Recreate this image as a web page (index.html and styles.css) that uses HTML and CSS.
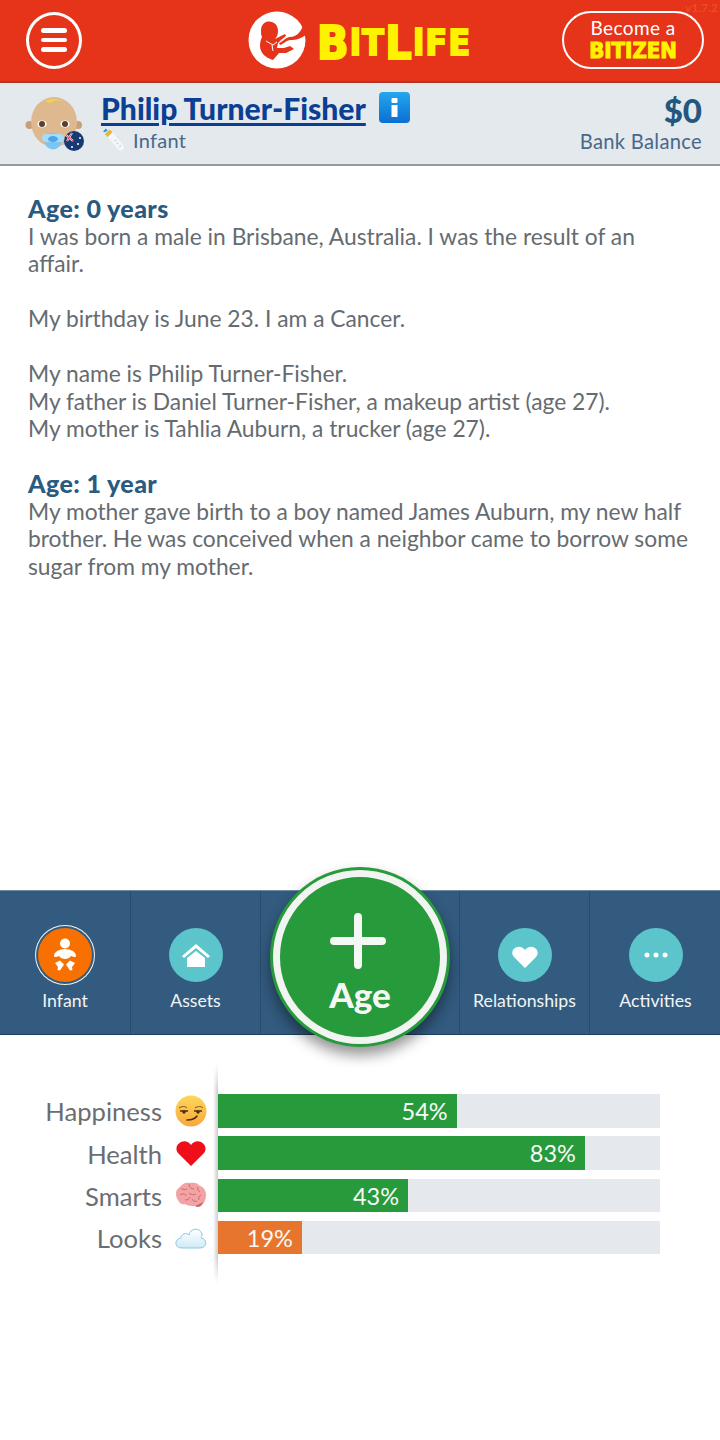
FILE: index.html
```html
<!DOCTYPE html>
<html lang="en">
<head>
<meta charset="utf-8">
<title>BitLife</title>
<link rel="stylesheet" href="styles.css">
</head>
<body>
<div class="app">
  <header class="topbar">
    <span class="version">v1.7.2</span>
    <button class="menu-btn" aria-label="Menu"><span></span><span></span><span></span></button>
    <div class="logo">
      <svg class="logo-mark" viewBox="0 0 58 58" aria-hidden="true">
        <circle cx="29" cy="29" r="28.5" fill="#fff"/>
        <path d="M13 20C13 13 17 10.500 21 10.500C26 10.500 30 14 30 20C30 23 29 26 27 28L33 25L37 23L38 25L33 29L30 32L29 37L36 37L42 35L46 38L38 42L31 42L25 49C18 47 12 42 12 35C12 31 13 28 14 26C13 24 13 22 13 20Z" fill="#e5341a"/>
        <path d="M31 32C36 30 38 26 42 26C48 26 52 22 55 15L58 24C52 28 48 29 43 29C38 29 36 33 32 34Z" fill="#e5341a"/>
        <path d="M18 30l7 4 4-3M24 34l1 6" stroke="#fff" stroke-width="1" fill="none"/>
      </svg>
      <div class="wordmark"><span class="big">B</span><span>i</span><span>T</span><span class="big">L</span><span>i</span><span>F</span><span>E</span></div>
    </div>
    <a class="bitizen"><span class="bitizen-top">Become a</span><span class="bitizen-bottom">BITIZEN</span></a>
  </header>

  <section class="profile">
    <svg class="avatar" viewBox="0 0 60 60" aria-hidden="true">
      <circle cx="4.500" cy="30" r="4" fill="#c99f78"/>
      <circle cx="53" cy="30" r="4" fill="#c99f78"/>
      <ellipse cx="29" cy="27" rx="23" ry="25" fill="#deb98f"/>
      <path d="M20 6c6-3 13-3 18 1-5-2-9-2-12 1-2 0-4-1-6-2z" fill="#f2cf4e"/>
      <ellipse cx="17" cy="29" rx="4.500" ry="3.500" fill="#fff"/>
      <circle cx="17" cy="29" r="3" fill="#5b3f30"/>
      <ellipse cx="40" cy="29" rx="4.500" ry="3.500" fill="#fff"/>
      <circle cx="40" cy="29" r="3" fill="#5b3f30"/>
      <circle cx="28" cy="46" r="8.500" fill="#7cc4f2"/>
      <rect x="17" y="39" width="22" height="8" rx="4" fill="#a6dcf8"/>
      <ellipse cx="28" cy="44" rx="5" ry="3" fill="#4ea6e4"/>
      <circle cx="49" cy="46" r="10" fill="#163a74"/>
      <path d="M41 40l7 6M47 38l-5 8" stroke="#fff" stroke-width="2"/>
      <path d="M41 40l7 6M47 38l-5 8" stroke="#d8324a" stroke-width="1"/>
      <circle cx="53" cy="49" r="1" fill="#fff"/><circle cx="47" cy="52" r="1" fill="#fff"/><circle cx="55" cy="43" r="1" fill="#fff"/>
    </svg>
    <div class="identity">
      <div class="name-row">
        <a class="name">Philip Turner-Fisher</a>
        <svg class="info" viewBox="0 0 31 31" aria-hidden="true">
          <defs><linearGradient id="infoGrad" x1="0" y1="0" x2="0" y2="1"><stop offset="0" stop-color="#25a7ee"/><stop offset="1" stop-color="#0a6fd3"/></linearGradient></defs>
          <rect width="31" height="31" rx="4" fill="url(#infoGrad)"/>
          <rect x="12.500" y="6" width="6" height="5" rx="1" fill="#fff"/>
          <rect x="12.500" y="13" width="6" height="12" fill="#fff"/>
        </svg>
      </div>
      <div class="stage">
        <svg class="bottle" viewBox="0 0 24 24" aria-hidden="true">
          <path d="M3 6l5-5 3 3-5 5z" fill="#f1b42f"/>
          <path d="M1 3l3-3 2 2-3 2z" fill="#2f9ed8"/>
          <path d="M6 9l5-5 11 13c1 2 1 4 0 5-2 2-4 1-5 0z" fill="#f4f7f9"/>
          <path d="M13 13l2-1M15 16l2-1M18 19l2-1" stroke="#b9c4cc" stroke-width="1"/>
        </svg>
        <span>Infant</span>
      </div>
    </div>
    <div class="balance">
      <div class="amount">$0</div>
      <div class="amount-label">Bank Balance</div>
    </div>
  </section>

  <main class="story">
    <h2>Age: 0 years</h2>
    <p>I was born a male in Brisbane, Australia. I was the result of an affair.</p>
    <p>My birthday is June 23. I am a Cancer.</p>
    <p>My name is Philip Turner-Fisher.<br>My father is Daniel Turner-Fisher, a makeup artist (age 27).<br>My mother is Tahlia Auburn, a trucker (age 27).</p>
    <h2>Age: 1 year</h2>
    <p>My mother gave birth to a boy named James Auburn, my new half brother. He was conceived when a neighbor came to borrow some sugar from my mother.</p>
  </main>

  <nav class="tabs">
    <div class="tab">
      <div class="tab-icon active">
        <svg viewBox="0 0 54 54" aria-hidden="true">
          <circle cx="27" cy="15.500" r="5" fill="#fff"/>
          <path d="M16 28c0-4 5-7 11-7s11 3 11 7c0 1-1 1-2 1l-3-1c-1 2-4 3-6 3s-5-1-6-3l-3 1c-1 0-2 0-2-1z" fill="#fff"/>
          <path d="M17 35l5-2.500 4 4-4 6-2.500-.5 .5-3z" fill="#fff"/>
          <path d="M37 35l-5-2.500-4 4 4 6 2.500-.5-.5-3z" fill="#fff"/>
        </svg>
      </div>
      <span>Infant</span>
    </div>
    <div class="tab">
      <div class="tab-icon">
        <svg viewBox="0 0 54 54" aria-hidden="true">
          <path d="M13 28l14-12 14 12-2 2-12-10-12 10z" fill="#fff"/>
          <path d="M18 30l9-7 9 7v9H18z" fill="#fff"/>
        </svg>
      </div>
      <span>Assets</span>
    </div>
    <div class="tab tab-center">
      <button class="age-btn">
        <svg class="plus" viewBox="0 0 58 58" aria-hidden="true">
          <path d="M29 5v48M5 29h48" stroke="#f4f7f4" stroke-width="8" stroke-linecap="round"/>
        </svg>
        <span>Age</span>
      </button>
    </div>
    <div class="tab">
      <div class="tab-icon">
        <svg viewBox="0 0 54 54" aria-hidden="true">
          <path d="M27 40L16 29c-6-7 5-15 11-7 6-8 17 0 11 7z" fill="#fff"/>
        </svg>
      </div>
      <span>Relationships</span>
    </div>
    <div class="tab">
      <div class="tab-icon">
        <svg viewBox="0 0 54 54" aria-hidden="true">
          <circle cx="18" cy="27" r="2.500" fill="#fff"/><circle cx="27" cy="27" r="2.500" fill="#fff"/><circle cx="36" cy="27" r="2.500" fill="#fff"/>
        </svg>
      </div>
      <span>Activities</span>
    </div>
  </nav>

  <section class="stats">
    <div class="stat">
      <span class="stat-label">Happiness</span>
      <svg class="stat-icon" viewBox="0 0 32 32" aria-hidden="true">
        <defs><linearGradient id="faceGrad" x1="0" y1="0" x2="0" y2="1"><stop offset="0" stop-color="#fcd75a"/><stop offset="1" stop-color="#f8a83c"/></linearGradient></defs>
        <circle cx="16" cy="16" r="15.500" fill="url(#faceGrad)"/>
        <path d="M4 13c3-2 6-2 8 0M20 13c3-2 6-2 8 0" stroke="#7a4a1e" stroke-width="1" fill="none"/>
        <path d="M5 16h8M19 16h8" stroke="#4c2e14" stroke-width="1.500"/>
        <circle cx="9" cy="17" r="1.700" fill="#4c2e14"/><circle cx="23" cy="17" r="1.700" fill="#4c2e14"/>
        <path d="M12 25c4 0 8-1 10-4" stroke="#4c2e14" stroke-width="1.500" fill="none" stroke-linecap="round"/>
      </svg>
      <div class="track"><div class="fill" style="width:54%">54%</div></div>
    </div>
    <div class="stat">
      <span class="stat-label">Health</span>
      <svg class="stat-icon" viewBox="0 0 32 32" aria-hidden="true">
        <path d="M16 29L3 16C-3 8 10-1 16 8c6-9 19 0 13 8z" fill="#ee0f1a"/>
      </svg>
      <div class="track"><div class="fill" style="width:83%">83%</div></div>
    </div>
    <div class="stat">
      <span class="stat-label">Smarts</span>
      <svg class="stat-icon" viewBox="0 0 32 32" aria-hidden="true">
        <path d="M1 15c0-5 3-6 5-8 2-3 6-4 9-3 4-1 8 0 10 3 4 1 6 5 6 9 0 5-2 8-4 10-1 2-5 3-7 1-3 0-7 0-10-2-3 1-6-1-7-4-1-1-2-3-2-6z" fill="#f3a3a3"/>
        <path d="M6 9c2 2 4 2 6 1M14 5c0 3 2 5 5 5M23 8c-1 2 0 4 2 5M5 16c3-2 5-1 7 1M14 14c2 2 5 2 7 1M26 16c-2 1-3 3-2 5M10 21c3 0 4-1 5-3M17 20c1 2 3 3 5 2" stroke="#c96b73" stroke-width="1" fill="none"/>
        <path d="M20 27c3 2 7 0 8-4-3 2-6 3-8 4z" fill="#c9606a"/>
      </svg>
      <div class="track"><div class="fill" style="width:43%">43%</div></div>
    </div>
    <div class="stat">
      <span class="stat-label">Looks</span>
      <svg class="stat-icon" viewBox="0 0 32 32" aria-hidden="true">
        <defs><linearGradient id="cloudGrad" x1="0" y1="0" x2="0" y2="1"><stop offset="0" stop-color="#fff"/><stop offset="1" stop-color="#cfeaf8"/></linearGradient></defs>
        <path d="M7 26c-8 0-8-9-1-10 0-4 5-6 8-3 1-7 11-8 13-1 0 2 0 3-1 4 7 1 6 10-1 10z" fill="url(#cloudGrad)" stroke="#8fc7e2" stroke-width="1"/>
      </svg>
      <div class="track"><div class="fill warn" style="width:19%">19%</div></div>
    </div>
  </section>
</div>
</body>
</html>
```
FILE: styles.css
```css
* { box-sizing: border-box; }
html, body { margin: 0; padding: 0; background: #fff; }
body { font-family: "Lato", "Liberation Sans", sans-serif; }
.app { width: 720px; height: 1440px; display: flex; flex-direction: column; overflow: hidden; }

.topbar { position: relative; height: 83px; flex: none; background: #e5341a; border-bottom: 2px solid #b3342c; display: flex; align-items: center; padding: 0 16px 1px 26px; }
.version { position: absolute; top: 0; right: 2px; font-size: 12px; font-weight: 700; color: #ee4b26; }
.menu-btn { width: 56px; height: 57px; flex: none; border: 3px solid #fff; border-radius: 50%; background: none; padding: 0; display: flex; flex-direction: column; align-items: center; justify-content: center; gap: 5px; }
.menu-btn span { width: 26px; height: 4.500px; border-radius: 3px; background: #fff; }
.logo { display: flex; align-items: center; gap: 11px; margin-left: 166px; }
.logo-mark { width: 58px; height: 58px; display: block; }
.wordmark { display: flex; align-items: flex-end; height: 40px; margin-top: 3px; color: #fff200; font-family: "DejaVu Sans Condensed", "DejaVu Sans", sans-serif; font-weight: 700; font-size: 35px; line-height: 38px; -webkit-text-stroke: 2px #fff200; gap: 1.500px; }
.wordmark .big { font-size: 46px; }
.bitizen { width: 142px; height: 58px; margin-left: auto; border: 2px solid #fff; border-radius: 29px; display: flex; flex-direction: column; align-items: center; padding-top: 4px; }
.bitizen-top { color: #fff; font-size: 19px; line-height: 21px; letter-spacing: .4px; }
.bitizen-bottom { color: #fff200; font-family: "DejaVu Sans Condensed", "DejaVu Sans", sans-serif; font-weight: 700; font-size: 22px; line-height: 22px; margin-top: 2px; -webkit-text-stroke: 1px #fff200; }

.profile { height: 83px; flex: none; background: #e4e9ee; border-bottom: 2px solid #8f9aa5; display: flex; align-items: flex-start; padding: 8px 18px 0 25px; }
.avatar { width: 60px; height: 60px; flex: none; margin-top: 4px; }
.identity { margin-left: 17px; flex: 1; }
.name-row { display: flex; align-items: center; gap: 13px; height: 32px; margin-top: 1px; }
.name { color: #0b3f93; font-size: 30.100px; font-weight: 900; line-height: 32px; text-decoration: underline; text-decoration-thickness: 2.500px; text-underline-offset: 3px; margin-left: -1px; }
.info { width: 31px; height: 31px; margin-top: -2px; }
.stage { display: flex; align-items: center; gap: 8px; margin-top: 3px; color: #47688a; font-size: 20px; line-height: 26px; letter-spacing: .3px; }
.bottle { width: 23px; height: 24px; }
.balance { text-align: right; }
.amount { color: #24577e; font-size: 33px; font-weight: 900; line-height: 38px; }
.amount-label { color: #47688a; font-size: 20.200px; line-height: 24px; letter-spacing: .3px; }

.story { flex: 1; padding: 29px 30px 0 28px; color: #666b70; font-size: 22.800px; line-height: 27.500px; }
.story h2 { margin: 0; font-size: 25px; line-height: 27.500px; letter-spacing: .4px; font-weight: 900; color: #2a5a80; }
.story p { margin: 0 0 27.500px; }

.tabs { height: 145px; flex: none; display: flex; background: #325b7f; border-top: 1px solid #6f8ba3; border-bottom: 1px solid #1e3f5b; }
.tab { width: 130px; flex: none; border-right: 1px solid #264c6e; display: flex; flex-direction: column; align-items: center; padding-top: 37px; color: #f2f5f7; font-size: 17.700px; line-height: 22px; }
.tab:first-child { width: 131px; }
.tab:last-child { width: 131px; border-right: 0; }
.tab-center { width: 199px; position: relative; padding: 0; }
.tab-icon { width: 54px; height: 54px; border-radius: 50%; background: #5bc5cb; margin-bottom: 8px; }
.tab-icon svg { display: block; width: 54px; height: 54px; }
.tab-icon.active { background: #f77000; box-shadow: 0 0 0 2px #325b7f, 0 0 0 3px #f2f5f7; }
.age-btn { position: absolute; left: 12px; top: -21px; width: 174px; height: 174px; border-radius: 50%; padding: 0; background: #279a3c; border: 7px solid #f1f4f1; box-shadow: 0 0 0 3px #279a3c, 0 8px 14px 3px rgba(0,0,0,.42); color: #f4f7f4; font-family: "Lato", sans-serif; font-size: 35px; font-weight: 900; display: flex; flex-direction: column; align-items: center; line-height: 40px; }
.plus { width: 58px; height: 58px; margin-top: 35px; margin-left: -4px; margin-bottom: 4px; flex: none; }

.stats { position: relative; flex: none; height: 405px; padding-top: 59px; display: flex; flex-direction: column; gap: 8.800px; }
.stats::before { content: ""; position: absolute; left: 213px; top: 29px; width: 5px; height: 220px; background: linear-gradient(to left, rgba(0,0,0,.2), rgba(0,0,0,0)); -webkit-mask-image: linear-gradient(to bottom, transparent, #000 12%, #000 88%, transparent); mask-image: linear-gradient(to bottom, transparent, #000 12%, #000 88%, transparent); }
.stat { display: flex; align-items: center; height: 33.500px; }
.stat-label { width: 162px; padding-top: 2px; text-align: right; color: #6a6e72; font-size: 25.600px; line-height: 33px; }
.stat-icon { width: 32px; height: 32px; flex: none; margin-left: 13px; }
.track { width: 442px; height: 100%; margin-left: 11px; background: #e5e8ec; }
.fill { height: 100%; background: #279a3c; color: #f7faf7; font-size: 23.500px; line-height: 34px; text-align: right; padding-right: 9px; }
.fill.warn { background: #e8752e; }
```
